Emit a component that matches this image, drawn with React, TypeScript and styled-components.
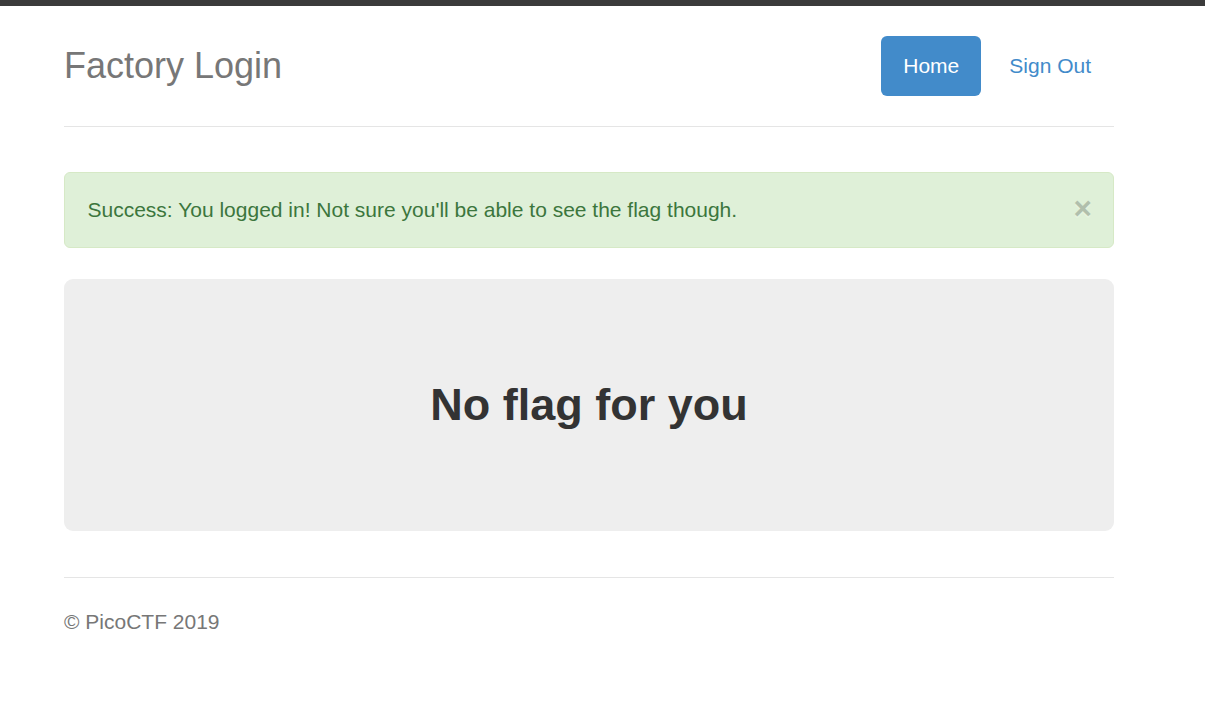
import React from "react";
import styled, { createGlobalStyle } from "styled-components";

const Global = createGlobalStyle`
  html, body { margin: 0; padding: 0; background: #fff; }
  body {
    font-family: "Liberation Sans", Arial, Helvetica, sans-serif;
    font-size: 21px;
    line-height: 1.42857;
    color: #333;
  }
  * { box-sizing: border-box; }
`;

const TopBar = styled.div`
  height: 6px;
  background: #3b3b3b;
`;

const Container = styled.div`
  width: 1050px;
  margin-left: 64px;
  padding-top: 30px;
  padding-bottom: 30px;
`;

const Header = styled.header`
  display: flex;
  justify-content: space-between;
  align-items: flex-start;
  padding-bottom: 30px;
  border-bottom: 1px solid #e5e5e5;
  margin-bottom: 45px;
`;

const Brand = styled.h3`
  margin: 0;
  font-size: 36px;
  line-height: 60px;
  font-weight: 400;
  color: #777;
`;

const Nav = styled.nav`
  display: flex;
  gap: 6px;
  margin-right: 1px;
`;

const Pill = styled.a<{ $active?: boolean }>`
  display: block;
  padding: 15px 22px;
  font-size: 21px;
  line-height: 30px;
  border-radius: 6px;
  text-decoration: none;
  color: ${(p) => (p.$active ? "#fff" : "#428bca")};
  background: ${(p) => (p.$active ? "#428bca" : "transparent")};
`;

const Alert = styled.div`
  display: flex;
  align-items: flex-start;
  justify-content: space-between;
  padding: 22px 21px 22px 22.5px;
  margin-bottom: 31px;
  background: #dff0d8;
  border: 1.5px solid #d6e9c6;
  border-radius: 6px;
  color: #3c763d;
`;

const AlertText = styled.span`
  line-height: 30px;
`;

const Close = styled.span`
  font-size: 31.5px;
  font-weight: 700;
  line-height: 1;
  color: #000;
  opacity: 0.2;
  text-shadow: 0 1.5px 0 #fff;
  margin-top: -2px;
`;

const Jumbotron = styled.section`
  display: flex;
  align-items: center;
  justify-content: center;
  height: 252px;
  padding: 0 90px;
  margin-bottom: 46px;
  background: #eee;
  border-radius: 9px;
`;

const Title = styled.h1`
  margin: 0;
  font-size: 45px;
  line-height: 1.1;
  font-weight: 700;
  color: #333;
  text-align: center;
`;

const Footer = styled.footer`
  border-top: 1px solid #e5e5e5;
  padding-top: 29px;
  color: #777;
`;

const FooterText = styled.p`
  margin: 0;
  line-height: 30px;
`;

export default function App() {
  return (
    <>
      <Global />
      <TopBar />
      <Container>
        <Header>
          <Brand>Factory Login</Brand>
          <Nav>
            <Pill $active href="#">Home</Pill>
            <Pill href="#">Sign Out</Pill>
          </Nav>
        </Header>
        <Alert>
          <AlertText>Success: You logged in! Not sure you'll be able to see the flag though.</AlertText>
          <Close>×</Close>
        </Alert>
        <Jumbotron>
          <Title>No flag for you</Title>
        </Jumbotron>
        <Footer>
          <FooterText>© PicoCTF 2019</FooterText>
        </Footer>
      </Container>
    </>
  );
}
